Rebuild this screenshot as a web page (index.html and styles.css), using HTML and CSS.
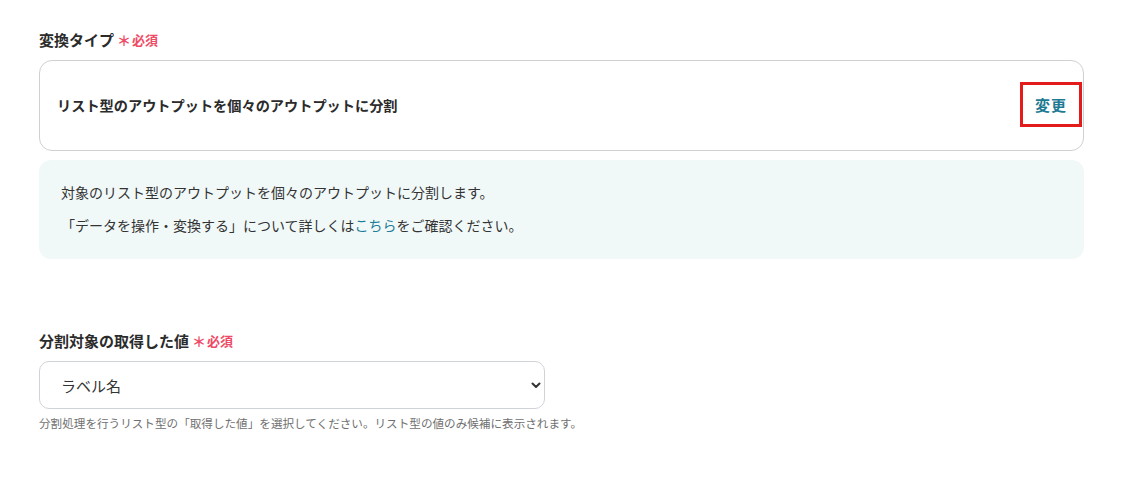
FILE: index.html
```html
<!DOCTYPE html>
<html lang="ja">
<head>
<meta charset="utf-8">
<link rel="stylesheet" href="styles.css">
</head>
<body>
<div class="page">
  <section class="field">
    <div class="label">変換タイプ<span class="req"><span class="ast">＊</span>必須</span></div>
    <div class="card">
      <div class="card-text">リスト型のアウトプットを個々のアウトプットに分割</div>
      <button class="change">変更</button>
    </div>
    <div class="info">
      <p>対象のリスト型のアウトプットを個々のアウトプットに分割します。</p>
      <p>「データを操作・変換する」について詳しくは<a class="link">こちら</a>をご確認ください。</p>
    </div>
  </section>
  <section class="field second">
    <div class="label">分割対象の取得した値<span class="req"><span class="ast">＊</span>必須</span></div>
    <div class="select">
      <span class="select-text">ラベル名</span>
      <svg class="chev" width="10" height="7" viewBox="0 0 10 7"><path d="M1.5 1.5 L5 5 L8.5 1.5" fill="none" stroke="#333" stroke-width="2" stroke-linecap="round" stroke-linejoin="round"/></svg>
    </div>
    <div class="help">分割処理を行うリスト型の「取得した値」を選択してください。リスト型の値のみ候補に表示されます。</div>
  </section>
</div>
</body>
</html>
```

FILE: styles.css
```css
* { box-sizing: border-box; }
body {
  margin: 0;
  background: #fff;
  font-family: "Noto Sans CJK JP", "Noto Sans", sans-serif;
  color: #333;
}
.page {
  padding: 30px 0 0 39px;
  width: 1084px;
}
.label {
  font-size: 15px;
  font-weight: 700;
  line-height: 20px;
  color: #2b2b2b;
  display: flex;
  align-items: center;
}
.req {
  color: #ef4a65;
  font-size: 13px;
  font-weight: 700;
  margin-left: 3px;
  display: flex;
  align-items: center;
}
.ast {
  font-size: 14px;
  margin-right: 1px;
  font-weight: 700;
}
.card {
  margin-top: 10px;
  height: 91px;
  border: 1px solid #d0d0d0;
  border-radius: 13px;
  display: flex;
  align-items: center;
  justify-content: space-between;
  padding: 0 1px 0 17px;
}
.card-text {
  font-size: 14.2px;
  font-weight: 700;
  color: #2b2b2b;
  margin-top: -2px;
}
.change {
  width: 62px;
  height: 45px;
  border: 3px solid #e41b1b;
  background: #fff;
  color: #1e7a93;
  font-family: inherit;
  font-size: 15px;
  font-weight: 700;
  padding: 0;
  margin-top: -3px;
  letter-spacing: 1px;
}
.info {
  margin-top: 9px;
  background: #f1f9f8;
  border-radius: 12px;
  padding: 16px 22px 18px;
  height: 99px;
}
.info p {
  margin: 0;
  font-size: 14px;
  line-height: 33px;
  color: #333;
}
.link { color: #1f7d9a; }
.second { margin-top: 72px; }
.select {
  margin-top: 10px;
  width: 506px;
  height: 48px;
  border: 1px solid #cfd3d8;
  border-radius: 10px;
  display: flex;
  align-items: center;
  justify-content: space-between;
  padding: 0 3px 0 21px;
}
.select-text {
  font-size: 15px;
  color: #333;
}
.chev { margin-top: 1px; }
.help {
  margin-top: 6px;
  font-size: 11.6px;
  line-height: 16px;
  color: #707070;
}
```
